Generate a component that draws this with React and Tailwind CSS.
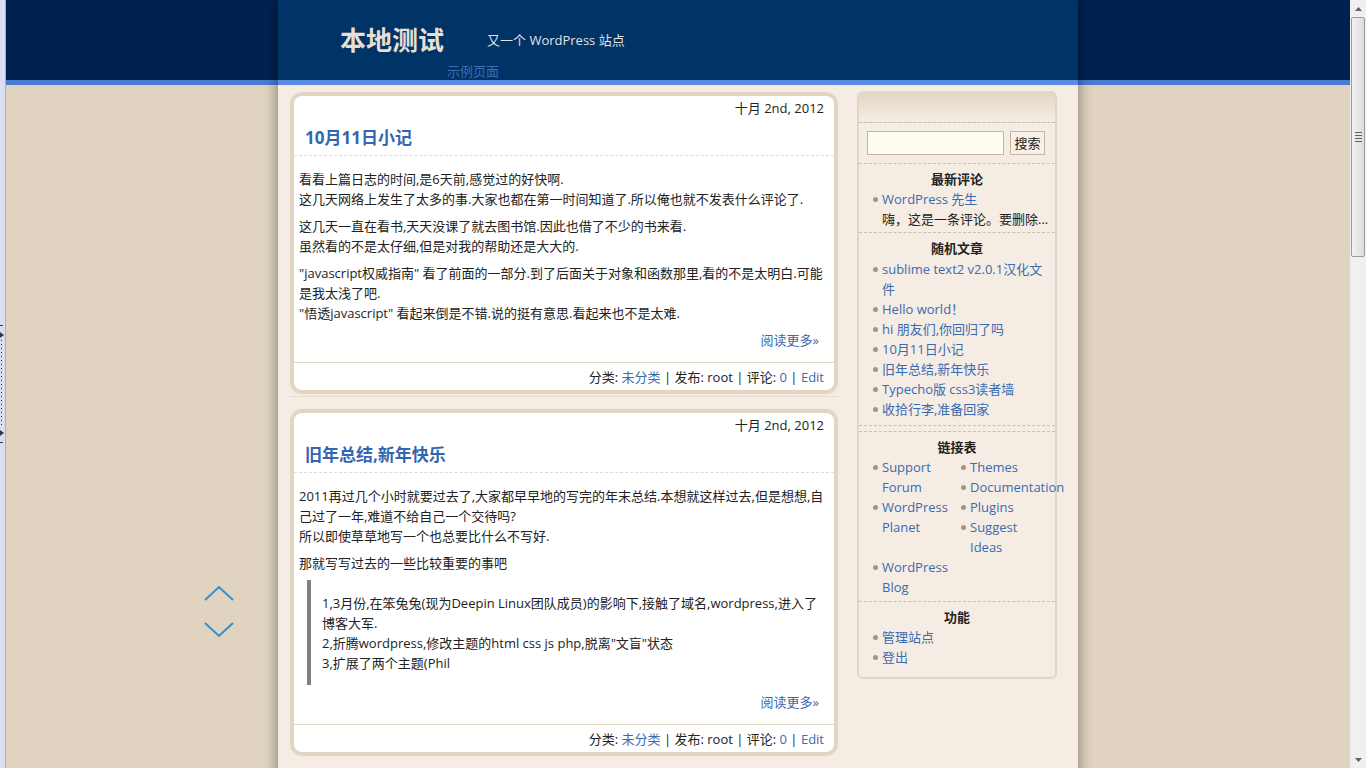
import React from 'react';

const LINK = 'text-[#3a6ab0]';

const Bullet = () => <span className="mr-[4px] mt-[8px] h-[5px] w-[5px] shrink-0 rounded-full bg-[#a39482]" />;

const Item = ({ children, className = '' }) => (
  <li className={`flex ${className}`}>
    <Bullet />
    <span className="min-w-0">{children}</span>
  </li>
);

const Widget = ({ title, children, last }) => (
  <div className={`pt-[5px] ${last ? 'pb-[10px]' : 'border-b border-dashed border-[#cbbfae]'}`}>
    <h3 className="text-center font-bold leading-[20px] text-[#222]">{title}</h3>
    {children}
  </div>
);

const Post = ({ title, children }) => (
  <div className="rounded-[12px] border-4 border-[#e2d6c3] bg-white">
    <div className="pr-[10px] pt-[2px] text-right leading-[20px]">十月 2nd, 2012</div>
    <h2 className="mt-[8px] border-b border-dashed border-[#dcdcdc] pb-[5px] pl-[11px] text-[17px] font-bold leading-[24px] text-[#3366b0]">
      {title}
    </h2>
    <div className="px-[5px] pt-[13px] leading-[20px]">
      {children}
      <div className={`mt-[7px] pr-[10px] text-right ${LINK}`}>阅读更多»</div>
    </div>
    <div className="mt-[12px] border-t border-[#e2d6c3] pb-[3px] pr-[10px] pt-[4px] text-right leading-[20px]">
      分类: <span className={LINK}>未分类</span> | 发布: root | 评论: <span className={LINK}>0</span> |{' '}
      <span className={LINK}>Edit</span>
    </div>
  </div>
);

const Sidebar = () => (
  <aside className="mt-[6px] w-[200px] shrink-0 rounded-[6px] border-2 border-[#e2d6c3] bg-[#f5ede4] text-[13px] leading-[20px]">
    <div className="h-[30px] rounded-t-[4px] border-b border-dashed border-[#cbbfae] bg-[linear-gradient(to_bottom,#e3d7c5,#f5ede4)]" />
    <div className="flex items-center gap-[6px] border-b border-dashed border-[#cbbfae] pb-[8px] pl-[8px] pt-[8px]">
      <div className="h-[24px] w-[137px] border border-[#c6b7a5] bg-[#fffdf2]" />
      <div className="flex h-[24px] w-[35px] items-center justify-center border border-[#c6b7a5] bg-[#f7f1e8] text-[#222]">搜索</div>
    </div>
    <Widget title="最新评论">
      <ul className="pb-[3px] pl-[14px] pr-[6px]">
        <Item>
          <span className={LINK}>WordPress 先生</span>
        </Item>
        <li className="pl-[9px] text-[#222]">嗨，这是一条评论。要删除...</li>
      </ul>
    </Widget>
    <Widget title="随机文章">
      <ul className={`pb-[6px] pl-[14px] pr-[6px] pt-[1px] ${LINK}`}>
        <Item>sublime text2 v2.0.1汉化文件</Item>
        <Item>Hello world！</Item>
        <Item>hi 朋友们,你回归了吗</Item>
        <Item>10月11日小记</Item>
        <Item>旧年总结,新年快乐</Item>
        <Item>Typecho版 css3读者墙</Item>
        <Item>收拾行李,准备回家</Item>
      </ul>
    </Widget>
    <div className="h-[6px] border-b border-dashed border-[#cbbfae]" />
    <Widget title="链接表">
      <div className={`flex pb-[4px] pl-[14px] ${LINK}`}>
        <ul className="w-[88px] shrink-0 pr-[4px]">
          <Item>Support Forum</Item>
          <Item>WordPress Planet</Item>
          <Item className="mt-[20px]">WordPress Blog</Item>
        </ul>
        <ul className="w-[88px] shrink-0 whitespace-normal">
          <Item>Themes</Item>
          <Item>Documentation</Item>
          <Item>Plugins</Item>
          <Item>
            <span className="block w-[72px]">Suggest Ideas</span>
          </Item>
        </ul>
      </div>
    </Widget>
    <Widget title="功能" last>
      <ul className={`pl-[14px] ${LINK}`}>
        <Item>管理站点</Item>
        <Item>登出</Item>
      </ul>
    </Widget>
  </aside>
);

const Chevron = ({ down }) => (
  <svg width="32" height="18" viewBox="0 0 32 18" fill="none">
    <path
      d={down ? 'M2 3 L16 16 L30 3' : 'M2 15 L16 2 L30 15'}
      stroke="#2f8fd0"
      strokeWidth="2"
    />
  </svg>
);

const Scrollbar = () => (
  <div className="flex h-[768px] w-[16px] shrink-0 flex-col bg-[#f0f0f0]">
    <div className="flex h-[17px] items-center justify-center">
      <svg width="7" height="4" viewBox="0 0 7 4">
        <path d="M0 4 L3.5 0 L7 4 Z" fill="#606060" />
      </svg>
    </div>
    <div className="mx-[1px] flex h-[240px] items-center justify-center rounded-[2px] border border-[#9a9a9a] bg-[linear-gradient(to_right,#f2f2f2,#dcdcdc)]">
      <div className="flex flex-col gap-[2px]">
        <div className="h-px w-[7px] bg-[#606060]" />
        <div className="h-px w-[7px] bg-[#606060]" />
        <div className="h-px w-[7px] bg-[#606060]" />
        <div className="h-px w-[7px] bg-[#606060]" />
      </div>
    </div>
    <div className="flex-1" />
    <div className="flex h-[17px] items-center justify-center">
      <svg width="7" height="4" viewBox="0 0 7 4">
        <path d="M0 0 L3.5 4 L7 0 Z" fill="#606060" />
      </svg>
    </div>
  </div>
);

const LeftStrip = () => (
  <div className="flex h-[768px] w-[6px] shrink-0 flex-col items-start border-r border-[#a9b0c2] bg-[#d9def0]">
    <div className="h-[325px]" />
    <div className="h-px w-[3px] bg-[#303848]" />
    <svg width="4" height="6" viewBox="0 0 4 6" className="mt-[6px]">
      <path d="M0 0 L4 3 L0 6 Z" fill="#303848" />
    </svg>
    <div className="ml-px mt-[2px] h-[88px] w-px bg-[repeating-linear-gradient(to_bottom,#303848_0,#303848_1px,transparent_1px,transparent_4px)]" />
    <svg width="4" height="6" viewBox="0 0 4 6" className="mt-[2px]">
      <path d="M0 0 L4 3 L0 6 Z" fill="#303848" />
    </svg>
    <div className="mt-[6px] h-px w-[3px] bg-[#303848]" />
  </div>
);

export default function App() {
  return (
    <div className="flex h-[768px] w-[1366px] overflow-hidden font-['Open_Sans','Noto_Sans_CJK_SC',sans-serif] text-[13px] text-[#222]">
      <LeftStrip />
      <div className="relative h-[768px] flex-1 overflow-hidden bg-[linear-gradient(to_bottom,#00214f_0,#00214f_80px,#4a7bd4_80px,#4a7bd4_85px,#e0d4c0_85px)]">
        <div className="ml-[272px] flex w-[800px] flex-col shadow-[0_0_14px_rgba(0,0,0,0.45)]">
          <header className="h-[80px] bg-[#003366] pt-[25px]">
            <div className="flex items-center pl-[62px]">
              <h1 className="text-[26px] font-bold leading-[30px] text-[#e6dfd2]">本地测试</h1>
              <p className="ml-[43px] pt-[2px] text-[13px] text-[#e2e2e2]">又一个 WordPress 站点</p>
            </div>
            <nav className="ml-[169px] mt-[8px] leading-[16px] text-[#3d6cb4]">示例页面</nav>
          </header>
          <div className="h-[5px] bg-[#5a8be0]" />
          <div className="flex items-start bg-[#f5ede4] pl-[12px]">
            <main className="w-[548px] shrink-0 pt-[7px]">
              <Post title="10月11日小记">
                <p>
                  看看上篇日志的时间,是6天前,感觉过的好快啊.
                  <br />
                  这几天网络上发生了太多的事.大家也都在第一时间知道了.所以俺也就不发表什么评论了.
                </p>
                <p className="mt-[7px]">
                  这几天一直在看书,天天没课了就去图书馆.因此也借了不少的书来看.
                  <br />
                  虽然看的不是太仔细,但是对我的帮助还是大大的.
                </p>
                <p className="mt-[7px]">
                  "javascript权威指南" 看了前面的一部分.到了后面关于对象和函数那里,看的不是太明白.可能是我太浅了吧.
                  <br />
                  "悟透javascript" 看起来倒是不错.说的挺有意思.看起来也不是太难.
                </p>
              </Post>
              <div className="mb-[12px] mt-[2px] h-px bg-[#e6dccd]" />
              <Post title="旧年总结,新年快乐">
                <p>
                  2011再过几个小时就要过去了,大家都早早地的写完的年末总结.本想就这样过去,但是想想,自己过了一年,难道不给自己一个交待吗?
                  <br />
                  所以即使草草地写一个也总要比什么不写好.
                </p>
                <p className="mt-[7px]">那就写写过去的一些比较重要的事吧</p>
                <blockquote className="ml-[8px] mr-[8px] mt-[7px] border-l-4 border-[#7f7f7f] pb-[12px] pl-[11px] pt-[13px]">
                  1,3月份,在笨兔兔(现为Deepin Linux团队成员)的影响下,接触了域名,wordpress,进入了博客大军.
                  <br />
                  2,折腾wordpress,修改主题的html css js php,脱离"文盲"状态
                  <br />
                  3,扩展了两个主题(Phil
                </blockquote>
              </Post>
            </main>
            <div className="ml-[19px]">
              <Sidebar />
            </div>
            <div className="h-[700px] w-[21px]" />
          </div>
        </div>
        <div className="absolute left-[197px] top-[585px] flex flex-col gap-[17px]">
          <Chevron />
          <Chevron down />
        </div>
      </div>
      <Scrollbar />
    </div>
  );
}
